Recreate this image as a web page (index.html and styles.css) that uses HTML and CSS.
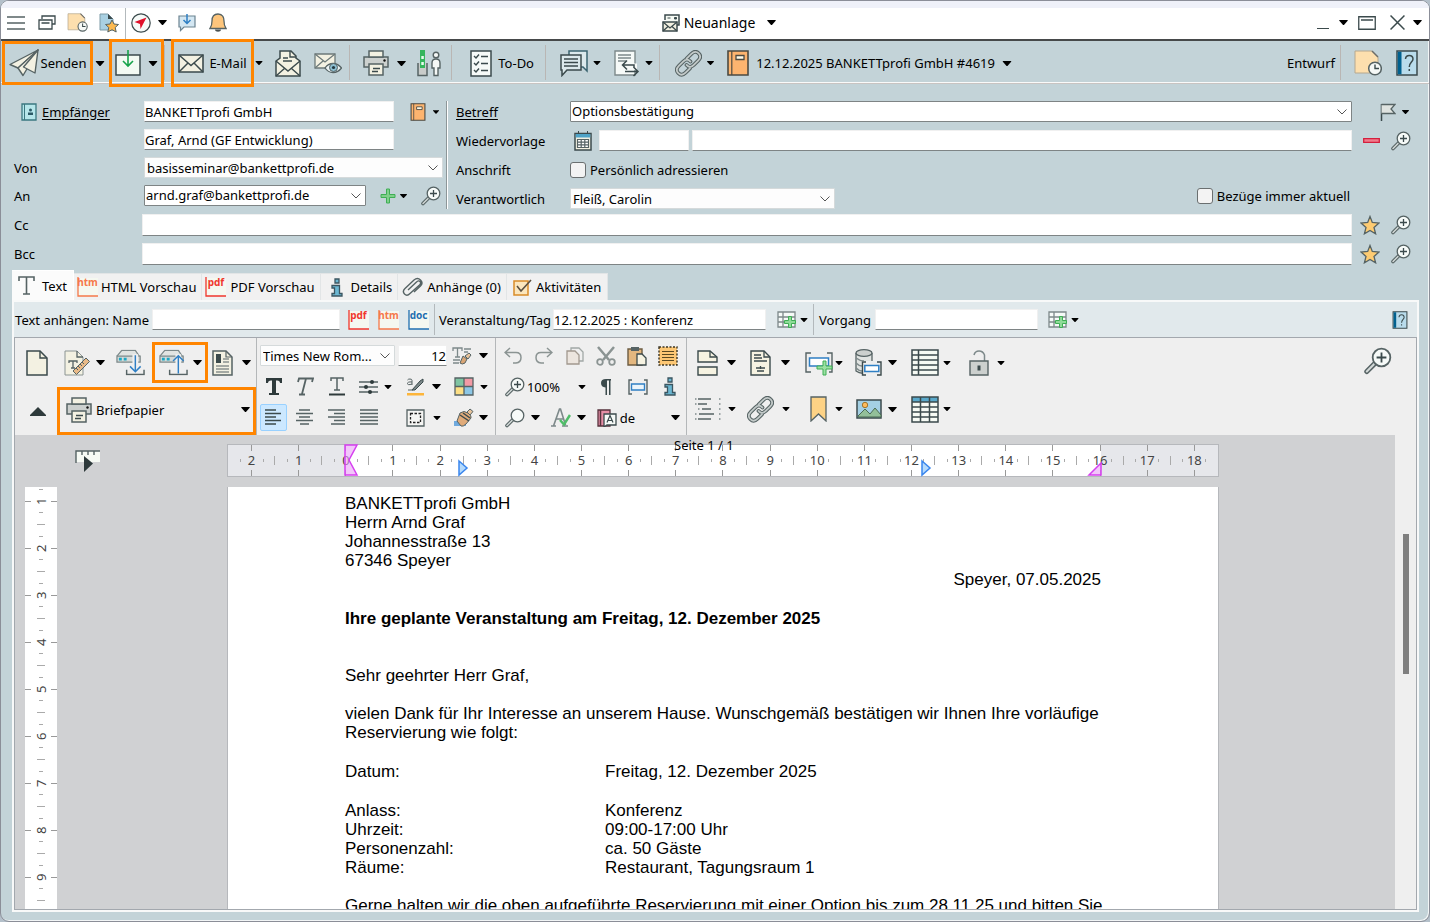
FILE: index.html
```html
<!DOCTYPE html>
<html lang="de">
<head>
<meta charset="utf-8">
<title>Neuanlage</title>
<link rel="stylesheet" href="styles.css">
</head>
<body>
<svg class="sprite" aria-hidden="true">
  <symbol id="caret" viewBox="0 0 10 6"><path d="M0 0h10v1L5.500 6h-1L0 1z" fill="#000"/></symbol>
  <symbol id="chev" viewBox="0 0 10 6"><path d="M.5.5 5 5 9.500.5" fill="none" stroke="#555"/></symbol>
  <symbol id="menu" viewBox="0 0 18 14"><path d="M0 1h18M0 7h18M0 13h18" stroke="#566364" stroke-width="1.500"/></symbol>
  <symbol id="windows" viewBox="0 0 18 15"><g fill="#fff" stroke="#3b4a4c" stroke-width="1.300"><path d="M4 4V1h13v8h-3"/><path d="M1 5h13v9H1zM3.500 8h8"/></g></symbol>
  <symbol id="doclock" viewBox="0 0 28 26"><path d="M1 1h17l6 6v16H1z" fill="#fddfae" stroke="#b5a890"/><path d="M18 1l6 6" stroke="#6d6d68" stroke-width="1.500"/><circle cx="21" cy="18.500" r="6.300" fill="#f5f8f6" stroke="#566364" stroke-width="1.500"/><path d="M21 14.500v4h4" fill="none" stroke="#3b4a4c" stroke-width="1.400"/></symbol>
  <symbol id="docstar" viewBox="0 0 20 20"><path d="M1 1h8l5 5v11H1z" fill="#a9d0e2" stroke="#7d9aa6"/><path d="M9 1v5h5z" fill="#3b4a4c"/><path d="m13 7 2 4 4.500.5-3.300 3 1 4.500-4.200-2.300L8.800 19l1-4.500-3.300-3 4.500-.5z" fill="#fdb94f" stroke="#566364"/></symbol>
  <symbol id="compass" viewBox="0 0 20 20"><circle cx="10" cy="10" r="9.200" fill="#f6faf8" stroke="#3b4a4c" stroke-width="1.200"/><path d="M15.500 4.500 3.500 9l5.500 2 .5 5z" fill="#e0102a"/></symbol>
  <symbol id="chatdown" viewBox="0 0 18 18"><path d="M1 2h16v11H6l-3.500 3.500V13H1z" fill="#d4e7f2" stroke="#6b8390" stroke-width="1.200"/><path d="M9 0v9M5.500 6 9 9.500 12.500 6" fill="none" stroke="#2f7fc4" stroke-width="1.500"/></symbol>
  <symbol id="bell" viewBox="0 0 18 20"><path d="M9 1c-5 0-6 4-6 7 0 4-.5 5.500-2 7.500h16C15.500 13.500 15 12 15 8c0-3-1-7-6-7z" fill="#fdc57c" stroke="#566364" stroke-width="1.300"/><path d="M6 16.500h6c0 3-6 3-6 0z" fill="#4a5152"/></symbol>
  <symbol id="mails" viewBox="0 0 18 18"><path d="M3 6V1h14v10h-2" fill="#f6faf4" stroke="#3b4a4c" stroke-width="1.500"/><path d="M12.500 3.500h2v1.500h-2zM5.500 4h3" fill="#3b4a4c" stroke="#3b4a4c"/><path d="M1 8h14v9H1z" fill="#f3f1e2" stroke="#3b4a4c" stroke-width="1.500"/><path d="m1 8 7 6 7-6M1 17l5-4.500M15 17l-5-4.500" fill="none" stroke="#3b4a4c" stroke-width="1.300"/></symbol>
  <symbol id="restore" viewBox="0 0 18 14"><path d="M.75.75h16.500v12.500H.75zM3 4h12" fill="#fff" stroke="#3b4a4c" stroke-width="1.300"/></symbol>
  <symbol id="close" viewBox="0 0 14 14"><path d="m.5.5 13 13M13.500.5l-13 13" stroke="#3b4a4c" stroke-width="1.400"/></symbol>
  <symbol id="plane" viewBox="0 0 30 28"><g fill="#f3f1e2" stroke="#566364" stroke-width="1.400" stroke-linejoin="round"><path d="M29 1 1 15.500l8 3.500z"/><path d="M29 1 9 19l5 7.500 3-5z"/><path d="M29 1 14.500 18l11.500 6z"/></g></symbol>
  <symbol id="savebox" viewBox="0 0 26 26"><path d="M1 5h24v20H1z" fill="#f3faf3" stroke="#3b4a4c" stroke-width="1.500"/><path d="M13 0v15M8 11l5 5 5-5" fill="none" stroke="#16a34a" stroke-width="1.600"/></symbol>
  <symbol id="mail" viewBox="0 0 26 19"><path d="M1 1h24v17H1z" fill="#f3f1e2" stroke="#3b4a4c" stroke-width="1.600"/><path d="m1 1 12 10.500L25 1M1 18l9-9M25 18l-9-9" fill="none" stroke="#3b4a4c" stroke-width="1.500"/></symbol>
  <symbol id="mailopen" viewBox="0 0 26 27"><path d="M1 11 5 8v-7h11l5 5v2l4 3v15H1z" fill="#f3f1e2" stroke="#3b4a4c" stroke-width="1.500"/><path d="M15 1v6h6M8 8h5M8 11h9M1 11l12 10 12-10M1 26l9-8M25 26l-9-8" fill="none" stroke="#3b4a4c" stroke-width="1.400"/></symbol>
  <symbol id="maileye" viewBox="0 0 28 21"><path d="M1 1h20v14H1z" fill="#f3f1e2" stroke="#6d7a7a" stroke-width="1.300"/><path d="m1 1 10 8L21 1M1 15l8-7" fill="none" stroke="#6d7a7a" stroke-width="1.300"/><path d="M11 15c4-6 12-6 16.500 0-4.500 6-12.500 6-16.500 0z" fill="#edf4f5" stroke="#566364" stroke-width="1.300"/><circle cx="19.500" cy="14.500" r="4" fill="#8dbfd2" stroke="#566364"/><circle cx="19.500" cy="14.500" r="1.600" fill="#22383f"/></symbol>
  <symbol id="printer" viewBox="0 0 26 26"><g stroke="#566364" stroke-width="1.500"><path d="M1 7h24v10H1z" fill="#ccd0ce"/><path d="M6 1h14v6H6z" fill="#f3f1e2"/><path d="M6 14h14v11H6z" fill="#f3f1e2"/></g><path d="M10 18.500h7M9 21.500h6" stroke="#3b4a4c" stroke-width="1.300"/><circle cx="21.500" cy="10.500" r="1.200" fill="#111"/></symbol>
  <symbol id="barperson" viewBox="0 0 24 27"><path d="M1 13v12.500h9V13" fill="#c9ccca" stroke="#566364" stroke-width="1.500"/><path d="M3 0h5v18H3z" fill="#35b55d"/><path d="M4.300 6h2.500v3H4.300zM4.300 12h2.500v3H4.300z" fill="#e8fbee"/><g fill="#f5f8f6" stroke="#566364" stroke-width="1.400"><circle cx="19" cy="5" r="2.800"/><path d="M15 18v-5q0-4 4-4t4 4v5h-2v7.500h-4V18z"/></g></symbol>
  <symbol id="todo" viewBox="0 0 22 27"><path d="M1 1h20v25H1z" fill="#f6faf8" stroke="#3b4a4c" stroke-width="1.500"/><path d="m4 6 2 2 3-3.500M4 13l2 2 3-3.500M4 20l2 2 3-3.500M11 6.500h7M11 13.500h7M11 20.500h7" fill="none" stroke="#3b4a4c" stroke-width="1.400"/></symbol>
  <symbol id="chats" viewBox="0 0 28 27"><path d="M9 5V1h18v20l-4-4h-3" fill="#dce9ec" stroke="#3b6470" stroke-width="1.500"/><path d="M1 5h20v15H7l-5 5.500V20H1z" fill="#dce9ec" stroke="#3b4a4c" stroke-width="1.500"/><path d="M4 9h14M4 12.500h14M4 16h14" stroke="#3b4a4c" stroke-width="1.300"/></symbol>
  <symbol id="docarrows" viewBox="0 0 26 27"><path d="M1 1h20v24H1z" fill="#f6faf8" stroke="#7d898a" stroke-width="1.400"/><path d="M4 5h13M4 8h13M4 11h8" stroke="#7d898a" stroke-width="1.300"/><path d="M21 20v-4.500H9" fill="none" stroke="#f6faf8" stroke-width="4"/><path d="M20 17v-2H9M13 10.500 8.500 15l4.500 4.500M11 21.500h13M19.500 17l4.500 4.500-4.500 4.500" fill="none" stroke="#3b4a4c" stroke-width="1.500"/></symbol>
  <symbol id="link" viewBox="0 0 28 28"><g fill="none" stroke-linecap="round"><path d="M12 9l5-5q4-4 7.500-.5t-.5 7.500l-4.500 4.500q-4 4-7.500 0M15.500 19l-4.500 4.500q-4 4-7.500.5t.5-7.500L8.500 12q4-4 7.500 0" stroke="#566364" stroke-width="4"/><path d="M12 9l5-5q4-4 7.500-.5t-.5 7.500l-4.500 4.500q-4 4-7.500 0M15.500 19l-4.500 4.500q-4 4-7.500.5t.5-7.500L8.500 12q4-4 7.500 0" stroke="#c3cac9" stroke-width="1.800"/></g></symbol>
  <symbol id="book" viewBox="0 0 22 26"><path d="M1 1h20v24H1z" fill="#fdb46f" stroke="#4b4a42" stroke-width="1.600"/><path d="M4.800 1v24" stroke="#4b4a42" stroke-width="1.200"/><path d="M9 5.500h8v4H9z" fill="#fffbe8" stroke="#4b4a42" stroke-width="1.300"/></symbol>
  <symbol id="help" viewBox="0 0 22 26"><path d="M1 1h20v24H1z" fill="#b9dcec" stroke="#3b4a4c" stroke-width="1.500"/><path d="M1.800 1.800h3.700v22.400H1.800z" fill="#00618f"/><path d="M9.500 9q.3-3.500 3.800-3.500T17 9c0 3-3.700 3.500-3.700 8M13.300 19v2" fill="none" stroke="#3b4a4c" stroke-width="1.500"/></symbol>
  <symbol id="flag" viewBox="0 0 16 18"><path d="M1.500 1v17" stroke="#3b4a4c" stroke-width="1.500"/><path d="M1.500 1.500H15L11 6l4 4.500H1.500" fill="#dfe3e0" stroke="#566364" stroke-width="1.300"/></symbol>
  <symbol id="minus" viewBox="0 0 17 5"><path d="M.7.7h15.600v3.600H.7z" fill="#f07c8c" stroke="#d41f3d" stroke-width="1.300"/></symbol>
  <symbol id="zoomplus" viewBox="0 0 20 20"><path d="m8 11.500-6 6" stroke="#566364" stroke-width="3.600" stroke-linecap="round"/><path d="m8 11.500-6 6" stroke="#d3d9d8" stroke-width="1.500" stroke-linecap="round"/><circle cx="12.500" cy="7.500" r="6.300" fill="#f6faf8" stroke="#566364" stroke-width="1.300"/><path d="M12.500 4v7M9 7.500h7" stroke="#3b4a4c" stroke-width="1.300"/></symbol>
  <symbol id="zoom" viewBox="0 0 20 20"><path d="m8 11.500-6 6" stroke="#566364" stroke-width="3.600" stroke-linecap="round"/><path d="m8 11.500-6 6" stroke="#d3d9d8" stroke-width="1.500" stroke-linecap="round"/><circle cx="12.500" cy="7.500" r="6.300" fill="#f6faf8" stroke="#566364" stroke-width="1.300"/></symbol>
  <symbol id="contact" viewBox="0 0 16 18"><path d="M1 1h14v16H1z" fill="#b6e6ea" stroke="#3b7880" stroke-width="1.300"/><path d="M3.500 1v16" stroke="#3b7880"/><circle cx="9.500" cy="7" r="1.500" fill="#2c5a66"/><path d="M7 12V9.500h5V12z" fill="#2c5a66"/></symbol>
  <symbol id="plus" viewBox="0 0 16 16"><path d="M6.500 1h3v5.500H15v3H9.500V15h-3V9.500H1v-3h5.500z" fill="#7fd08a" stroke="#3fae55"/></symbol>
  <symbol id="cal" viewBox="0 0 18 20"><path d="M1 2.500h16V19H1z" fill="#f3f1e2" stroke="#3b4a4c" stroke-width="1.500"/><path d="M1.700 3h14.600v3.500H1.700z" fill="#4fa3c7"/><path d="M4.500 0v3M13.500 0v3" stroke="#3b4a4c"/><path d="M3.500 8.500h11v8h-11zM3.500 11.200h11M3.500 13.800h11M7.200 8.500v8M10.800 8.500v8" fill="#fff" stroke="#566364" stroke-width="1.200"/></symbol>
  <symbol id="star" viewBox="0 0 20 20"><path d="m10 1.500 2.300 6 6.700.6-5 4.300 1.600 6.400-5.600-3.400-5.600 3.400L6 12.400 1 8.100l6.700-.6z" fill="#fdcb72" stroke="#566364" stroke-width="1.300"/></symbol>
  <symbol id="tee" viewBox="0 0 17 19"><path d="M1 5V1h15v4M8.500 1v17M5 18h7" fill="none" stroke="#566364" stroke-width="1.600"/></symbol>
  <symbol id="corner" viewBox="0 0 21 20"><path d="M1 1h20v18H1z" fill="#f5f8f0"/><path d="M1 0v19h20" fill="none" stroke="currentColor" stroke-width="1.300"/></symbol>
  <symbol id="info" viewBox="0 0 12 19"><path d="M4 1h4v4H4zM1 7.500h7.500v8H11V18H1v-2.500h2.500V10H1z" fill="#6bb7d2" stroke="#3b5560" stroke-width="1.300"/></symbol>
  <symbol id="clip" viewBox="0 0 21 20"><path d="m6 13 8.500-8q2-2 3.500-.5t-.5 3.500L8 16.500q-3 3-5.500.5t.5-5.500L12 3q3.500-3 6.500 0t0 6L12 15" fill="none" stroke="#566364" stroke-width="1.400"/></symbol>
  <symbol id="checkbox" viewBox="0 0 19 18"><path d="M1 3h14v14H1z" fill="#fbe6bd" stroke="#d98c28" stroke-width="1.500"/><path d="m4 8 4 5L18 2" fill="none" stroke="#5b5040" stroke-width="1.600"/></symbol>
  <symbol id="tableplus" viewBox="0 0 20 18"><path d="M1 1h17v15H1zM1 6h17M1 11h17M6 1v15" fill="#f6faf8" stroke="#7d898a" stroke-width="1.300"/><path d="M11.500 5.500h3v4h4v3h-4v4h-3v-4h-4v-3h4z" fill="#8fdb98" stroke="#3fae55"/></symbol>
  <symbol id="page" viewBox="0 0 22 26"><path d="M1 1h13l7 7v17H1z" fill="#f3f1e2" stroke="#3b4a4c" stroke-width="1.500"/><path d="M14 1v7h7" fill="none" stroke="#3b4a4c" stroke-width="1.400"/></symbol>
  <symbol id="pageruler" viewBox="0 0 26 26"><path d="M1 1h12l6 6v18H1z" fill="#f3f1e2" stroke="#8b9493"/><path d="M13 1v6h6M5 13v-2h8v2M9 11v7M7 18h4" fill="none" stroke="#566364" stroke-width="1.300"/><path d="M9 21 22 8l3.500 3.500-13 13z" fill="#e8b987" stroke="#566364"/><path d="m12 18 2 2m0-4 2 2m0-4 2 2m0-4 2 2" stroke="#566364"/></symbol>
  <symbol id="drive" viewBox="0 0 30 27"><path d="M1 7 6 1h14l4 6" fill="#e1e4e2" stroke="#7d898a" stroke-width="1.300"/><path d="M1 7h24v6H1z" fill="#d5dad8" stroke="#7d898a" stroke-width="1.300"/><path d="M3 8.500h3v3H3zM8 8.500h3v3H8z" fill="#1ba7c4"/><path d="M20 5v18" stroke="#f0f0f0" stroke-width="6"/><path d="M11 21v5h18v-5" fill="none" stroke="#566364" stroke-width="1.500"/></symbol>
  <symbol id="drivedown" viewBox="0 0 30 27"><use href="#drive"/><path d="M20 6v17M14.500 17.500 20 23l5.500-5.500" fill="none" stroke="#2f7fc4" stroke-width="1.500"/></symbol>
  <symbol id="driveup" viewBox="0 0 30 27"><use href="#drive"/><path d="M20 25V6M14.500 12 20 6.500l5.500 5.500" fill="none" stroke="#2f7fc4" stroke-width="1.500"/></symbol>
  <symbol id="news" viewBox="0 0 21 26"><path d="M1 1h13l6 6v18H1z" fill="#f3f1e2" stroke="#566364" stroke-width="1.500"/><path d="M4 4h5v9H4z" fill="#3b4a4c"/><path d="M14 1v6h6M11 9h6M11 12h6M4 16h13M4 19h13M4 22h13" fill="none" stroke="#566364" stroke-width="1.200"/></symbol>
  <symbol id="up" viewBox="0 0 16 9"><path d="M8 0l8 8v1H0V8z" fill="#2e3a3b"/></symbol>
  <symbol id="tbrush" viewBox="0 0 21 18"><path d="M1 4V1h9v3M5.500 1v9M3 10h5M12 2h7M12 5h4M1 13h7M1 16h6" fill="none" stroke="#7d898a" stroke-width="1.300"/><path d="m8 16 3-7 4 3-2 4q-3 2-5 0z" fill="#d9a575" stroke="#566364"/><path d="m13 9 4-3 2 2-3 4z" fill="#e8c39b" stroke="#566364"/></symbol>
  <symbol id="bold" viewBox="0 0 18 19"><path d="M1 1h16v5h-2q0-2.500-3-2.500h-1V16h3v2H4v-2h3V3.500H6Q3 3.500 3 6H1z" fill="#2e3a3b"/></symbol>
  <symbol id="ital" viewBox="0 0 19 19"><path d="m3 5 1-3.500h14L17 5M11 1.500 7 17M4 17.500h6" fill="none" stroke="#566364" stroke-width="1.800"/></symbol>
  <symbol id="under" viewBox="0 0 18 19"><path d="M3 4V1h12v3M9 1v12M6 13h6" fill="none" stroke="#566364" stroke-width="1.500"/><path d="M1 17.500h16" stroke="#2e3a3b" stroke-width="2"/></symbol>
  <symbol id="sliders" viewBox="0 0 19 16"><path d="M0 3h19M0 8h19M0 13h19" stroke="#566364" stroke-width="1.500"/><circle cx="13" cy="3" r="2" fill="#2e3a3b"/><circle cx="7" cy="8" r="2" fill="#2e3a3b"/><circle cx="11" cy="13" r="2" fill="#2e3a3b"/></symbol>
  <symbol id="marker" viewBox="0 0 19 19"><path d="M1 16h17v2.500H1z" fill="#fdb53a"/><path d="m6 13 8-9 3-2v3l-8 8z" fill="#7d898a" stroke="#3b4a4c"/><path d="M6 8V3.500Q6 2 4 2T1.500 3M6 5Q1.500 4.500 1.500 6.500T6 7M2 13h5" fill="none" stroke="#566364"/></symbol>
  <symbol id="palette" viewBox="0 0 20 19"><path d="M1 1h9v8.500H1z" fill="#7fc4a2"/><path d="M10 1h9v8.500h-9z" fill="#f29aa5"/><path d="M1 9.500h9V18H1z" fill="#fddf84"/><path d="M10 9.500h9V18h-9z" fill="#8cc7e6"/><path d="M1 1h18v17H1zM10 1v17M1 9.500h18" fill="none" stroke="#566364" stroke-width="1.300"/></symbol>
  <symbol id="al" viewBox="0 0 17 17"><path d="M0 1h11M0 4.500h16M0 8h11M0 11.500h16M0 15h11" stroke="#3b4a4c" stroke-width="1.300"/></symbol>
  <symbol id="ac" viewBox="0 0 17 17"><path d="M3 1h11M0 4.500h17M3 8h11M0 11.500h17M4 15h9" stroke="#566364" stroke-width="1.300"/></symbol>
  <symbol id="ar" viewBox="0 0 17 17"><path d="M0 1h17M6 4.500h11M0 8h17M6 11.500h11M3 15h14" stroke="#566364" stroke-width="1.300"/></symbol>
  <symbol id="aj" viewBox="0 0 18 17"><path d="M0 1h18M0 4.500h18M0 8h18M0 11.500h18M0 15h18" stroke="#566364" stroke-width="1.300"/></symbol>
  <symbol id="frame" viewBox="0 0 19 18"><path d="M1 1h17v16H1z" fill="#f6f6f4" stroke="#566364" stroke-width="1.300"/><path d="M4.500 4.500h10v9h-10z" fill="none" stroke="#222" stroke-width="1.300" stroke-dasharray="2.500 1.500"/></symbol>
  <symbol id="brush" viewBox="0 0 20 19"><path d="M0 13h12v5H0z" fill="#6fa9dd"/><path d="m3 13 3-8q4-3 8 0t3 5l-5 6q-3 3-5 2z" fill="#e0ab7a" stroke="#566364"/><path d="m6 7 9 6M9 5l7 5" stroke="#3b4a4c" stroke-width="1.500"/><path d="m13 4 3-3 3 2.500L16 7z" fill="#e8c39b" stroke="#566364"/></symbol>
  <symbol id="undo" viewBox="0 0 18 17"><path d="M6 1 1 5.500 6 10M1 5.500h11q5 0 5 5t-5 5.500H9" fill="none" stroke="#8b9493" stroke-width="1.500"/></symbol>
  <symbol id="redo" viewBox="0 0 18 17"><path d="m12 1 5 4.500-5 4.500M17 5.500H6q-5 0-5 5T6 16h3" fill="none" stroke="#8b9493" stroke-width="1.500"/></symbol>
  <symbol id="copy" viewBox="0 0 18 18"><path d="M5 4V1h8l4 4v9h-4" fill="none" stroke="#a1a8a6" stroke-width="1.300"/><path d="M1 4h8l4 4v9H1z" fill="#ece5de" stroke="#a1988e" stroke-width="1.300"/></symbol>
  <symbol id="cut" viewBox="0 0 20 20"><path d="M2 1l11 13M18 1 7 14" stroke="#8b9493" stroke-width="2.500"/><circle cx="4" cy="16" r="2.800" fill="none" stroke="#8b9493" stroke-width="1.800"/><circle cx="16" cy="16" r="2.800" fill="none" stroke="#8b9493" stroke-width="1.800"/></symbol>
  <symbol id="paste" viewBox="0 0 20 20"><path d="M1 3h14v16H1z" fill="#e3b77f" stroke="#6d5c42" stroke-width="1.400"/><path d="M4 1h8v4H4z" fill="#566364"/><path d="M10 8h5l4 4v7h-9z" fill="#f6f3e2" stroke="#3b4a4c" stroke-width="1.300"/></symbol>
  <symbol id="selall" viewBox="0 0 20 20"><path d="M1 1h18v18H1z" fill="#fdc774" stroke="#3b3422" stroke-width="1.400" stroke-dasharray="2 1.500"/><path d="M4 5.500h12M4 8.500h12M4 11.500h12M4 14.500h12" stroke="#5c4a22" stroke-width="1.200"/></symbol>
  <symbol id="para" viewBox="0 0 12 18"><path d="M11 1H6Q1 1 1 5t4.500 4.500V17H7V2.500h2V17h1.500V2.500H11z" fill="#3b4a4c"/></symbol>
  <symbol id="field" viewBox="0 0 20 16"><path d="M4 1H1v14h3M16 1h3v14h-3" fill="none" stroke="#566364" stroke-width="1.400"/><path d="M3.500 5h13v6h-13z" fill="#eaf4fb" stroke="#2f7fc4" stroke-width="1.400"/></symbol>
  <symbol id="spell" viewBox="0 0 20 19"><path d="M0 18h5M2.500 18 8.500 1h1l5 16M5 11h7M11 18h6" fill="none" stroke="#7d898a" stroke-width="1.600"/><path d="m9 12 4 4.500L19 7" fill="none" stroke="#4fbd68" stroke-width="2.500"/></symbol>
  <symbol id="lang" viewBox="0 0 20 18"><path d="M1 1h12v16H1z" fill="#e58fa6" stroke="#56323d" stroke-width="1.300"/><path d="M3.500 1v16" stroke="#56323d" stroke-width="1.500"/><path d="M7 5h12v11H10l-3 2z" fill="#f6faf8" stroke="#3b4a4c" stroke-width="1.300"/><path d="m10 13.500 3-7 3 7M11 11.500h4" fill="none" stroke="#3b4a4c" stroke-width="1.200"/></symbol>
  <symbol id="pagebreak" viewBox="0 0 22 26"><path d="M1 12V1h12l7 6v5zM1 17h19v8H1z" fill="#f6f3e2" stroke="#3b4a4c" stroke-width="1.400"/><path d="M13 1v6h7" fill="none" stroke="#3b4a4c" stroke-width="1.300"/></symbol>
  <symbol id="doctext" viewBox="0 0 21 26"><path d="M1 1h13l6 6v18H1z" fill="#f6f3e2" stroke="#3b4a4c" stroke-width="1.400"/><path d="M14 1v6h6M4 5h7M4 8h8M4 11h13M6 18h9M7 21h7M10.500 16v3" fill="none" stroke="#3b4a4c" stroke-width="1.300"/></symbol>
  <symbol id="fieldplus" viewBox="0 0 28 26"><path d="M6 3H1v19h5M22 3h5v19h-3" fill="none" stroke="#566364" stroke-width="1.400"/><path d="M4.500 8h19v8h-19z" fill="#fff" stroke="#2f7fc4" stroke-width="1.500"/><path d="M18 11h3v5h6v3h-6v6h-3v-6h-6v-3h6z" fill="#9be0a3" stroke="#3fae55"/></symbol>
  <symbol id="dbfield" viewBox="0 0 27 27"><path d="M1 4v18q4 3 9 2V14h7V4" fill="#e1e4e2" stroke="#566364" stroke-width="1.300"/><path d="M1 9q4 3 8 3M1 14q3 3 6 3M1 19q3 3 6 3" fill="none" stroke="#7d898a" stroke-width="1.500"/><ellipse cx="9" cy="4" rx="8" ry="3.300" fill="#ccd0ce" stroke="#566364" stroke-width="1.300"/><path d="M7 12h19.500v15H7z" fill="#efefef"/><path d="M11 13H7.500v13H11M22 13h4v13h-4" fill="none" stroke="#3b4a4c" stroke-width="1.400"/><path d="M9.800 16.500h14v6h-14z" fill="#fff" stroke="#2f7fc4" stroke-width="1.500"/></symbol>
  <symbol id="rows" viewBox="0 0 28 27"><path d="M1 1h26v25H1zM1 6h26M1 11h26M1 16h26M1 21h26M7.500 1v25" fill="#f6faf4" stroke="#3b4a4c" stroke-width="1.500"/></symbol>
  <symbol id="lock" viewBox="0 0 20 26"><path d="M5 5q1-4 5-4t5.500 4v6" fill="none" stroke="#7d898a" stroke-width="1.500"/><path d="M1 11h18v14H1z" fill="#ccd0ce" stroke="#566364" stroke-width="1.400"/><path d="M8.500 15.500h3v5h-3z" fill="#3b4a4c"/></symbol>
  <symbol id="lines" viewBox="0 0 26 22"><path d="M3 1h13M3 6h9M7 11h9M4 16h15M3 21h13" stroke="#566364" stroke-width="1.400"/><path d="M0 1h1.500M0 6h1.500M3 11h1.500M0 16h1.500M0 21h1.500M24 1h1.500M24 6h1.500M24 11h1.500M24 16h1.500M24 21h1.500" stroke="#7d898a" stroke-width="1.500"/></symbol>
  <symbol id="bookmark" viewBox="0 0 17 26"><path d="M1 1h15v24l-7.500-7L1 25z" fill="#fdd285" stroke="#566364" stroke-width="1.300"/></symbol>
  <symbol id="image" viewBox="0 0 26 20"><path d="M1 1h24v18H1z" fill="#a4d0e4" stroke="#3b4a4c" stroke-width="1.500"/><path d="m2 17 7-7 5 5 5-6 6 7v2H2z" fill="#93c09a" stroke="#4b6a52"/><circle cx="9" cy="6" r="2.700" fill="#fdba5a" stroke="#a0762c"/></symbol>
  <symbol id="table" viewBox="0 0 28 27"><path d="M1 1h26v25H1z" fill="#f6faf4"/><path d="M1 1h26v5H1z" fill="#5aa9cb"/><path d="M1 1h26v25H1zM1 6h26M1 11h26M1 16h26M1 21h26M9.500 1v25M18.500 1v25" fill="none" stroke="#3b4a4c" stroke-width="1.500"/></symbol>
  <symbol id="rulerplay" viewBox="0 0 26 22"><path d="M1 1h24v11H1z" fill="#f6faf4"/><path d="M1 13V1h24M7 1v4M13 1v4M19 1v4" fill="none" stroke="#566364" stroke-width="1.400"/><path d="M9 6l9 7.500L9 22z" fill="#2e3a3b"/></symbol>
</svg>

<div class="window">
  <header class="titlebar">
    <div class="title-left">
      <button class="ib" aria-label="Menü"><svg width="18" height="14"><use href="#menu"/></svg></button>
      <button class="ib" aria-label="Fenster"><svg width="18" height="15"><use href="#windows"/></svg></button>
      <button class="ib" aria-label="Wiedervorlage"><svg width="21" height="19"><use href="#doclock"/></svg></button>
      <button class="ib" aria-label="Favorit"><svg width="20" height="20"><use href="#docstar"/></svg></button>
      <i class="rule"></i>
      <button class="ib" aria-label="Kompass"><svg width="20" height="20"><use href="#compass"/></svg></button>
      <button class="ib" aria-label="Mehr"><svg width="9" height="5"><use href="#caret"/></svg></button>
      <button class="ib" aria-label="Nachrichten"><svg width="18" height="18"><use href="#chatdown"/></svg></button>
      <button class="ib" aria-label="Hinweise"><svg width="18" height="20"><use href="#bell"/></svg></button>
    </div>
    <button class="ib title"><svg width="18" height="18"><use href="#mails"/></svg><span>Neuanlage</span><svg class="far" width="9" height="5"><use href="#caret"/></svg></button>
    <div class="title-right">
      <button class="ib min" aria-label="Minimieren"></button>
      <button class="ib" aria-label="Mehr"><svg width="9" height="5"><use href="#caret"/></svg></button>
      <button class="ib" aria-label="Wiederherstellen"><svg width="18" height="14"><use href="#restore"/></svg></button>
      <button class="ib" aria-label="Schließen"><svg width="15" height="15"><use href="#close"/></svg></button>
      <button class="ib" aria-label="Mehr"><svg width="9" height="5"><use href="#caret"/></svg></button>
    </div>
  </header>

  <div class="mainbar">
    <button class="ib mark send"><svg width="30" height="28"><use href="#plane"/></svg>Senden</button>
    <button class="ib" aria-label="Senden mehr"><svg width="10" height="5"><use href="#caret"/></svg></button>
    <button class="ib mark tall save" aria-label="Speichern"><svg width="26" height="26"><use href="#savebox"/></svg><svg width="10" height="5"><use href="#caret"/></svg></button>
    <i class="rule"></i>
    <button class="ib mark tall email"><svg width="26" height="19"><use href="#mail"/></svg>E-Mail</button>
    <button class="ib" aria-label="E-Mail mehr"><svg width="8" height="4"><use href="#caret"/></svg></button>
    <button class="ib" aria-label="Mail öffnen"><svg width="26" height="27"><use href="#mailopen"/></svg></button>
    <button class="ib" aria-label="Mail Vorschau"><svg width="28" height="21"><use href="#maileye"/></svg></button>
    <i class="rule"></i>
    <button class="ib" aria-label="Drucken"><svg width="26" height="26"><use href="#printer"/></svg></button>
    <button class="ib" aria-label="Drucken mehr"><svg width="9" height="5"><use href="#caret"/></svg></button>
    <button class="ib" aria-label="Status"><svg width="24" height="27"><use href="#barperson"/></svg></button>
    <i class="rule"></i>
    <button class="ib gap6"><svg width="22" height="27"><use href="#todo"/></svg>To-Do</button>
    <i class="rule"></i>
    <button class="ib" aria-label="Kommentare"><svg width="28" height="27"><use href="#chats"/></svg></button>
    <button class="ib" aria-label="Mehr"><svg width="8" height="4"><use href="#caret"/></svg></button>
    <button class="ib" aria-label="Umwandeln"><svg width="26" height="27"><use href="#docarrows"/></svg></button>
    <button class="ib" aria-label="Mehr"><svg width="8" height="4"><use href="#caret"/></svg></button>
    <i class="rule"></i>
    <button class="ib" aria-label="Verknüpfung"><svg width="27" height="27"><use href="#link"/></svg></button>
    <button class="ib" aria-label="Mehr"><svg width="7" height="4"><use href="#caret"/></svg></button>
    <button class="ib" aria-label="Buchung"><svg width="22" height="26"><use href="#book"/></svg></button>
    <button class="ib gap8">12.12.2025 BANKETTprofi GmbH #4619<svg width="10" height="5"><use href="#caret"/></svg></button>
    <span>Entwurf</span>
    <i class="rule"></i>
    <button class="ib" aria-label="Wiedervorlage"><svg width="28" height="26"><use href="#doclock"/></svg></button>
    <button class="ib" aria-label="Hilfe"><svg width="22" height="26"><use href="#help"/></svg></button>
  </div>

  <form class="form">
    <div class="heads">
      <div class="left">
        <label class="lead" for="emp"><svg width="16" height="18"><use href="#contact"/></svg><u>Empfänger</u></label>
        <div class="line">
          <input id="emp" class="box w250" value="BANKETTprofi GmbH">
          <button type="button" class="ib push" aria-label="Adressbuch"><svg width="16" height="18"><use href="#book"/></svg><svg width="6" height="4"><use href="#caret"/></svg></button>
        </div>
        <span></span>
        <div class="line"><input class="box w250" aria-label="Ansprechpartner" value="Graf, Arnd (GF Entwicklung)"></div>
        <label for="von">Von</label>
        <div class="pick soft wide"><select id="von"><option>basisseminar@bankettprofi.de</option></select><svg width="10" height="6"><use href="#chev"/></svg></div>
        <label for="an">An</label>
        <div class="line">
          <div class="pick hard w222"><select id="an"><option>arnd.graf@bankettprofi.de</option></select><svg width="10" height="6"><use href="#chev"/></svg></div>
          <button type="button" class="ib tight push14" aria-label="Hinzufügen"><svg width="16" height="16"><use href="#plus"/></svg><svg width="7" height="4"><use href="#caret"/></svg></button>
          <button type="button" class="ib push14" aria-label="Suchen"><svg width="20" height="20"><use href="#zoomplus"/></svg></button>
        </div>
      </div>
      <div class="right">
        <label for="betreff"><u>Betreff</u></label>
        <div class="pick hard"><select id="betreff"><option>Optionsbestätigung</option></select><svg width="10" height="6"><use href="#chev"/></svg></div>
        <button type="button" class="ib side flagside" aria-label="Markierung"><svg width="16" height="18"><use href="#flag"/></svg><svg width="7" height="4"><use href="#caret"/></svg></button>
        <label for="wv">Wiedervorlage</label>
        <div class="line due">
          <button type="button" class="ib" aria-label="Kalender"><svg width="18" height="20"><use href="#cal"/></svg></button>
          <input id="wv" class="box w90">
          <input class="box grow" aria-label="Wiedervorlage Text">
        </div>
        <div class="side pair"><button type="button" class="ib" aria-label="Entfernen"><svg width="17" height="5"><use href="#minus"/></svg></button><button type="button" class="ib" aria-label="Suchen"><svg width="20" height="20"><use href="#zoomplus"/></svg></button></div>
        <span>Anschrift</span>
        <label class="check"><input type="checkbox">Persönlich adressieren</label>
        <span></span>
        <label for="ver">Verantwortlich</label>
        <div class="line spread">
          <div class="pick soft w265"><select id="ver"><option>Fleiß, Carolin</option></select><svg width="10" height="6"><use href="#chev"/></svg></div>
          <label class="check"><input type="checkbox">Bezüge immer aktuell</label>
        </div>
        <span></span>
      </div>
    </div>
    <div class="copies">
      <label for="cc">Cc</label><input id="cc" class="box">
      <div class="side pair"><button type="button" class="ib" aria-label="Favorit"><svg width="20" height="20"><use href="#star"/></svg></button><button type="button" class="ib" aria-label="Suchen"><svg width="20" height="20"><use href="#zoomplus"/></svg></button></div>
      <label for="bcc">Bcc</label><input id="bcc" class="box">
      <div class="side pair"><button type="button" class="ib" aria-label="Favorit"><svg width="20" height="20"><use href="#star"/></svg></button><button type="button" class="ib" aria-label="Suchen"><svg width="20" height="20"><use href="#zoomplus"/></svg></button></div>
    </div>
  </form>

  <nav class="tabs">
    <button class="tab active"><svg width="17" height="19"><use href="#tee"/></svg>Text</button>
    <button class="tab"><span class="ext htm">htm<svg width="21" height="20"><use href="#corner"/></svg></span>HTML Vorschau</button>
    <button class="tab"><span class="ext pdf">pdf<svg width="21" height="20"><use href="#corner"/></svg></span>PDF Vorschau</button>
    <button class="tab"><svg width="12" height="19"><use href="#info"/></svg>Details</button>
    <button class="tab"><svg width="21" height="20"><use href="#clip"/></svg>Anhänge (0)</button>
    <button class="tab"><svg width="19" height="18"><use href="#checkbox"/></svg>Aktivitäten</button>
  </nav>

  <main class="panel">
    <div class="subbar">
      <label for="tname">Text anhängen: Name</label>
      <input id="tname" class="box">
      <button class="ib ext pdf">pdf<svg width="21" height="20"><use href="#corner"/></svg></button>
      <button class="ib ext htm">htm<svg width="21" height="20"><use href="#corner"/></svg></button>
      <button class="ib ext doc">doc<svg width="21" height="20"><use href="#corner"/></svg></button>
      <i class="rule"></i>
      <label for="vtag">Veranstaltung/Tag</label>
      <input id="vtag" class="box" value="12.12.2025 : Konferenz">
      <button class="ib" aria-label="Einfügen"><svg width="20" height="18"><use href="#tableplus"/></svg></button>
      <button class="ib" aria-label="Mehr"><svg width="8" height="4"><use href="#caret"/></svg></button>
      <i class="rule"></i>
      <label for="vorgang">Vorgang</label>
      <input id="vorgang" class="box">
      <button class="ib" aria-label="Einfügen"><svg width="20" height="18"><use href="#tableplus"/></svg></button>
      <button class="ib" aria-label="Mehr"><svg width="8" height="4"><use href="#caret"/></svg></button>
      <button class="ib" aria-label="Hilfe"><svg width="16" height="18"><use href="#help"/></svg></button>
    </div>

    <div class="editor">
      <div class="ribbon">
        <section class="files">
          <div class="filerow">
            <button class="ib" aria-label="Neu"><svg width="22" height="26"><use href="#page"/></svg></button>
            <button class="ib" aria-label="Layout"><svg width="26" height="26"><use href="#pageruler"/></svg></button>
            <button class="ib" aria-label="Mehr"><svg width="9" height="5"><use href="#caret"/></svg></button>
            <button class="ib" aria-label="Speichern"><svg width="29" height="27"><use href="#drivedown"/></svg></button>
            <button class="ib mark load" aria-label="Laden"><svg width="29" height="27"><use href="#driveup"/></svg><svg width="9" height="5"><use href="#caret"/></svg></button>
            <button class="ib" aria-label="Vorlage"><svg width="21" height="26"><use href="#news"/></svg></button>
            <button class="ib" aria-label="Mehr"><svg width="9" height="5"><use href="#caret"/></svg></button>
          </div>
          <div class="paperrow">
            <button class="ib" aria-label="Einklappen"><svg width="16" height="9"><use href="#up"/></svg></button>
            <button class="ib mark paper"><svg width="26" height="26"><use href="#printer"/></svg><span>Briefpapier</span><svg width="9" height="5"><use href="#caret"/></svg></button>
          </div>
        </section>

        <section class="fonts">
          <div class="fontrow">
            <div class="pick soft"><select aria-label="Schriftart"><option>Times New Rom...</option></select><svg width="10" height="6"><use href="#chev"/></svg></div>
            <input class="box num" aria-label="Schriftgröße" value="12">
            <button class="ib" aria-label="Format"><svg width="21" height="18"><use href="#tbrush"/></svg></button>
            <button class="ib" aria-label="Mehr"><svg width="9" height="5"><use href="#caret"/></svg></button>
          </div>
          <div class="fmtrow">
            <button class="ib cell" aria-label="Fett"><svg width="18" height="19"><use href="#bold"/></svg></button>
            <button class="ib cell" aria-label="Kursiv"><svg width="19" height="19"><use href="#ital"/></svg></button>
            <button class="ib cell" aria-label="Unterstrichen"><svg width="18" height="19"><use href="#under"/></svg></button>
            <button class="ib cell" aria-label="Abstand"><svg width="19" height="16"><use href="#sliders"/></svg></button>
            <button class="ib" aria-label="Mehr"><svg width="8" height="4"><use href="#caret"/></svg></button>
            <button class="ib cell" aria-label="Textmarker"><svg width="19" height="19"><use href="#marker"/></svg></button>
            <button class="ib" aria-label="Mehr"><svg width="9" height="5"><use href="#caret"/></svg></button>
            <button class="ib cell" aria-label="Farbe"><svg width="20" height="19"><use href="#palette"/></svg></button>
            <button class="ib" aria-label="Mehr"><svg width="8" height="4"><use href="#caret"/></svg></button>
          </div>
          <div class="fmtrow">
            <button class="ib cell on" aria-label="Linksbündig"><svg width="17" height="17"><use href="#al"/></svg></button>
            <button class="ib cell" aria-label="Zentriert"><svg width="17" height="17"><use href="#ac"/></svg></button>
            <button class="ib cell" aria-label="Rechtsbündig"><svg width="17" height="17"><use href="#ar"/></svg></button>
            <button class="ib cell" aria-label="Blocksatz"><svg width="18" height="17"><use href="#aj"/></svg></button>
            <span></span>
            <button class="ib cell" aria-label="Rahmen"><svg width="19" height="18"><use href="#frame"/></svg></button>
            <button class="ib" aria-label="Mehr"><svg width="8" height="4"><use href="#caret"/></svg></button>
            <button class="ib cell" aria-label="Pinsel"><svg width="20" height="19"><use href="#brush"/></svg></button>
            <button class="ib" aria-label="Mehr"><svg width="9" height="5"><use href="#caret"/></svg></button>
          </div>
        </section>

        <section class="edits">
          <div class="editrow">
            <button class="ib" aria-label="Rückgängig"><svg width="18" height="17"><use href="#undo"/></svg></button>
            <button class="ib" aria-label="Wiederholen"><svg width="18" height="17"><use href="#redo"/></svg></button>
            <button class="ib" aria-label="Kopieren"><svg width="18" height="18"><use href="#copy"/></svg></button>
            <button class="ib" aria-label="Ausschneiden"><svg width="20" height="20"><use href="#cut"/></svg></button>
            <button class="ib" aria-label="Einfügen"><svg width="20" height="20"><use href="#paste"/></svg></button>
            <button class="ib" aria-label="Alles markieren"><svg width="20" height="20"><use href="#selall"/></svg></button>
          </div>
          <div class="zoomrow">
            <button class="ib cell" aria-label="Zoom"><svg width="20" height="20"><use href="#zoomplus"/></svg></button>
            <span>100%</span>
            <button class="ib" aria-label="Zoomstufe"><svg width="8" height="4"><use href="#caret"/></svg></button>
            <button class="ib cell" aria-label="Absatzmarken"><svg width="12" height="18"><use href="#para"/></svg></button>
            <button class="ib cell" aria-label="Feld"><svg width="20" height="16"><use href="#field"/></svg></button>
            <button class="ib cell" aria-label="Info"><svg width="12" height="19"><use href="#info"/></svg></button>
          </div>
          <div class="langrow">
            <button class="ib cell" aria-label="Suchen"><svg width="20" height="20"><use href="#zoom"/></svg></button>
            <button class="ib" aria-label="Mehr"><svg width="9" height="5"><use href="#caret"/></svg></button>
            <button class="ib cell" aria-label="Rechtschreibung"><svg width="20" height="19"><use href="#spell"/></svg></button>
            <button class="ib" aria-label="Mehr"><svg width="9" height="5"><use href="#caret"/></svg></button>
            <button class="ib cell" aria-label="Sprache"><svg width="20" height="18"><use href="#lang"/></svg></button>
            <span>de</span>
            <button class="ib" aria-label="Sprachauswahl"><svg width="9" height="5"><use href="#caret"/></svg></button>
          </div>
        </section>

        <section class="inserts">
          <div class="insrow">
            <button class="ib cell" aria-label="Umbruch"><svg width="22" height="26"><use href="#pagebreak"/></svg></button>
            <button class="ib" aria-label="Mehr"><svg width="9" height="5"><use href="#caret"/></svg></button>
            <button class="ib cell" aria-label="Kopfzeile"><svg width="21" height="26"><use href="#doctext"/></svg></button>
            <button class="ib" aria-label="Mehr"><svg width="9" height="5"><use href="#caret"/></svg></button>
            <button class="ib cell" aria-label="Feld einfügen"><svg width="28" height="26"><use href="#fieldplus"/></svg></button>
            <button class="ib" aria-label="Mehr"><svg width="8" height="4"><use href="#caret"/></svg></button>
            <button class="ib cell" aria-label="Datenfeld"><svg width="27" height="27"><use href="#dbfield"/></svg></button>
            <button class="ib" aria-label="Mehr"><svg width="9" height="5"><use href="#caret"/></svg></button>
            <button class="ib cell" aria-label="Zeilen"><svg width="28" height="27"><use href="#rows"/></svg></button>
            <button class="ib" aria-label="Mehr"><svg width="8" height="4"><use href="#caret"/></svg></button>
            <button class="ib cell" aria-label="Sperre"><svg width="20" height="26"><use href="#lock"/></svg></button>
            <button class="ib" aria-label="Mehr"><svg width="8" height="4"><use href="#caret"/></svg></button>
          </div>
          <div class="insrow">
            <button class="ib cell" aria-label="Liste"><svg width="26" height="22"><use href="#lines"/></svg></button>
            <button class="ib" aria-label="Mehr"><svg width="8" height="4"><use href="#caret"/></svg></button>
            <button class="ib cell" aria-label="Verknüpfung"><svg width="27" height="27"><use href="#link"/></svg></button>
            <button class="ib" aria-label="Mehr"><svg width="8" height="4"><use href="#caret"/></svg></button>
            <button class="ib cell" aria-label="Textmarke"><svg width="17" height="26"><use href="#bookmark"/></svg></button>
            <button class="ib" aria-label="Mehr"><svg width="8" height="4"><use href="#caret"/></svg></button>
            <button class="ib cell" aria-label="Bild"><svg width="26" height="20"><use href="#image"/></svg></button>
            <button class="ib" aria-label="Mehr"><svg width="9" height="5"><use href="#caret"/></svg></button>
            <button class="ib cell" aria-label="Tabelle"><svg width="28" height="27"><use href="#table"/></svg></button>
            <button class="ib" aria-label="Mehr"><svg width="8" height="4"><use href="#caret"/></svg></button>
          </div>
        </section>
        <button class="ib bigzoom" aria-label="Vergrößern"><svg width="28" height="28"><use href="#zoomplus"/></svg></button>
      </div>

      <div class="work">
        <div class="canvas">
          <button class="ib rulerbtn" aria-label="Lineal"><svg width="26" height="22"><use href="#rulerplay"/></svg></button>
          <div class="hruler">
            <div class="ticks">
              <span>2</span><span>1</span><span>0</span><span>1</span><span>2</span><span>3</span><span>4</span><span>5</span><span>6</span><span>7</span><span>8</span><span>9</span><span>10</span><span>11</span><span>12</span><span>13</span><span>14</span><span>15</span><span>16</span><span>17</span><span>18</span>
            </div>
            <svg class="stops" viewBox="0 0 992 33" aria-hidden="true">
              <g fill="#e9a0f6" fill-opacity=".6" stroke="#d63ff0" stroke-width="1.500"><path d="M118 1h12l-8 15 8 15h-12z"/><path d="M874 19v12h-12z"/></g>
              <g fill="#b5dafc" stroke="#3a86ee" stroke-width="1.500"><path d="m232 17 8 7-8 7zM695 17l8 7-8 7z"/></g>
            </svg>
            <p class="pages">Seite 1 / 1</p>
          </div>
          <div class="vruler">
            <span>1</span><span>2</span><span>3</span><span>4</span><span>5</span><span>6</span><span>7</span><span>8</span><span>9</span><span></span>
          </div>
          <article class="sheet">
            <p>BANKETTprofi GmbH<br>Herrn Arnd Graf<br>Johannesstraße 13<br>67346 Speyer</p>
            <p class="date">Speyer, 07.05.2025</p>
            <h1>Ihre geplante Veranstaltung am Freitag, 12. Dezember 2025</h1>
            <p class="para">Sehr geehrter Herr Graf,</p>
            <p class="para">vielen Dank für Ihr Interesse an unserem Hause. Wunschgemäß bestätigen wir Ihnen Ihre vorläufige<br>Reservierung wie folgt:</p>
            <dl><dt>Datum:</dt><dd>Freitag, 12. Dezember 2025</dd></dl>
            <dl><dt>Anlass:</dt><dd>Konferenz</dd><dt>Uhrzeit:</dt><dd>09:00-17:00 Uhr</dd><dt>Personenzahl:</dt><dd>ca. 50 Gäste</dd><dt>Räume:</dt><dd>Restaurant, Tagungsraum 1</dd></dl>
            <p class="para">Gerne halten wir die oben aufgeführte Reservierung mit einer Option bis zum 28.11.25 und bitten Sie</p>
          </article>
        </div>
        <div class="scroll"><i></i></div>
      </div>
    </div>
  </main>
</div>
</body>
</html>
```
FILE: styles.css
```css
* { box-sizing: border-box; }
body {
  margin: 0;
  height: 100vh;
  background: #b4c0ca;
  font: 13px/18px "Noto Sans", "Open Sans", sans-serif;
  color: #000;
}
.sprite { display: none; }
svg { display: block; flex: none; }
p, h1, dl, dd { margin: 0; }

.window {
  height: 100%;
  display: flex;
  flex-direction: column;
  border: 1px solid #8b8e98;
  border-radius: 9px;
  background: #c3d3d8;
  overflow: hidden;
  box-shadow: inset -1px -1px 0 #f2f5f6;
}

.ib {
  display: flex;
  align-items: center;
  justify-content: center;
  padding: 0;
  border: 0;
  background: none;
  font: inherit;
  color: inherit;
  white-space: nowrap;
}
.rule { width: 1px; align-self: stretch; background: #b3b9bc; }

/* title bar */
.titlebar {
  display: grid;
  grid-template-columns: 1fr auto 1fr;
  height: 40px;
  flex: none;
  background: #fff;
  border-top: 7px solid #eff1f9;
  border-bottom: 2px solid #46494a;
}
.title-left {
  display: grid;
  grid-template-columns: 30px 31px 31px 32px 1px 30px 13px 36px 25px;
  padding-bottom: 2px;
}
.title-left .rule { margin-bottom: -2px; }
.title { gap: 4px; font-size: 14px; padding: 0 0 2px 8px; }
.title .far { margin-left: 8px; }
.title-right {
  display: grid;
  grid-template-columns: 22px 18px 30px 30px 10px;
  justify-content: end;
  padding: 0 7px 2px 0;
}
.min::before { content: ""; width: 12px; height: 1px; margin-top: 12px; background: #3b4a4c; }

/* main toolbar */
.mainbar {
  display: grid;
  grid-template-columns: 91px 12px 59px 1px 89px 9px 38px 41px 8px 39px 17px 35px 11px 82px 12px 42px 13px 39px 13px 7px 42px 12px 35px 263px 1fr 6px 41px 36px;
  justify-items: end;
  align-items: center;
  height: 43px;
  flex: none;
  padding: 0 11px 0 1px;
  border-bottom: 1px solid #c9c4c2;
  box-shadow: inset 0 -1px 0 #fafafa;
}
.mainbar .rule { margin: 4px 0 5px; background: #b9b6b4; }
.mark { position: relative; }
.mark::after {
  content: "";
  position: absolute;
  inset: 0;
  border: 3px solid #ff8500;
  pointer-events: none;
}
.send { width: 91px; height: 44px; gap: 2px; }
.save { width: 55px; height: 44px; gap: 7px; }
.email { width: 83px; height: 44px; gap: 5px; }
.tall::after { inset: -2px 0; }
.gap6 { gap: 6px; }
.gap8 { gap: 7px; }

/* address form */
.form { flex: none; padding-top: 17px; }
.heads { display: grid; grid-template-columns: 446px 1fr; }
.left {
  display: grid;
  grid-template-columns: 130px 1fr;
  grid-template-rows: repeat(4, 21px);
  row-gap: 7px;
  align-items: center;
  padding-left: 13px;
  box-shadow: 1px 0 0 #fff, inset -1px 0 0 #8d9698;
}
.right {
  display: grid;
  grid-template-columns: 114px 1fr 77px;
  grid-template-rows: repeat(4, 21px);
  row-gap: 8px;
  align-items: center;
  padding-left: 9px;
}
.lead { display: flex; gap: 5px; padding-left: 7px; align-items: center; }
u { text-underline-offset: 2px; }
.line { display: flex; align-items: center; }
.box {
  height: 21px;
  min-width: 0;
  padding: 0;
  border: 1px solid #f0f0f0;
  border-bottom-color: #7e8485;
  border-radius: 0;
  background: #fff;
  font: inherit;
  color: inherit;
}
.grow { flex: 1; }
.w250 { width: 250px; }
.w90 { width: 90px; }
.w222 { width: 222px; }
.w265 { width: 265px; }
.wide { margin-right: 4px; }
.push { margin-left: 16px; gap: 7px; }
.push14 { margin-left: 14px; }
.tight { gap: 4px; }
.pick { position: relative; height: 21px; }
.pick select {
  display: block;
  width: 100%;
  height: 100%;
  padding: 0 20px 0 2px;
  border: 1px solid #d5dadb;
  border-radius: 1px;
  background: #fdfdfd;
  appearance: none;
  font: inherit;
  color: inherit;
}
.pick.hard select { padding: 0 20px 2px 1px; border-color: #7e8485; background: #fff; }
.pick svg { position: absolute; right: 5px; top: 8px; pointer-events: none; }
.side { justify-self: end; margin-right: 18px; }
.flagside { gap: 6px; margin-right: 20px; }
.pair { display: flex; align-items: center; gap: 11px; }
.due { padding-left: 4px; gap: 3px; }
.due .w90 { margin-left: 4px; }
.check { display: flex; align-items: center; gap: 4px; }
.check input {
  width: 16px;
  height: 16px;
  margin: 0;
  border: 1px solid #6a6f70;
  border-radius: 3px;
  background: #f3f3f3;
  appearance: none;
}
.spread { justify-content: space-between; }
.spread .check { padding: 0 2px 6px 0; }
.copies {
  display: grid;
  grid-template-columns: 128px 1fr 77px;
  row-gap: 7px;
  align-items: center;
  padding: 5px 0 0 13px;
}
.copies .box { height: 22px; }

/* tabs */
.tabs { display: flex; align-items: flex-end; flex: none; height: 35px; padding: 5px 0 0 11px; }
.tab {
  display: flex;
  align-items: center;
  gap: 3px;
  height: 27px;
  padding: 0 5px 0 3px;
  border: 1px solid #e2e5e6;
  border-width: 1px 1px 0 0;
  background: #f1f1f1;
  font: inherit;
  color: inherit;
  white-space: nowrap;
}
.tab.active { height: 30px; gap: 7px; padding: 0 6px; background: #fbfbfb; border-color: #fff; }
.tab:nth-child(3) { gap: 4px; }
.tab:nth-child(4) { gap: 8px; padding-left: 10px; }
.tab:nth-child(5) { gap: 4px; padding-left: 4px; }
.tab:nth-child(6) { gap: 4px; padding: 0 6px; }
.ext {
  position: relative;
  width: 21px;
  height: 20px;
  align-items: flex-start;
  font: bold 10px/10px "Noto Sans", sans-serif;
  text-align: center;
  z-index: 0;
}
.ext svg { position: absolute; inset: 0; z-index: -1; }
.htm { color: #f5784a; }
.pdf { color: #f0362c; }
.doc { color: #1f6fb0; }

/* panel */
.panel {
  flex: 1;
  min-height: 0;
  display: flex;
  flex-direction: column;
  margin: 0 10px 9px 11px;
  border: 2px solid #f8f9f9;
}
.subbar {
  display: grid;
  grid-template-columns: 135px 191px 29px 30px 30px 6px 116px 215px 31px 11px 6px 57px 167px 30px 11px 1fr;
  justify-items: end;
  align-items: center;
  height: 35px;
  flex: none;
  padding-right: 9px;
  background: #e1e9ec;
}
.subbar label { white-space: nowrap; }
.subbar .box:nth-child(2) { width: 188px; }
.subbar .box:nth-child(8) { width: 213px; }
.subbar .box:nth-child(13) { width: 163px; }
.subbar .rule { margin: 2px 0; }
.editor {
  flex: 1;
  min-height: 0;
  display: flex;
  flex-direction: column;
  border: 1px solid #a3a8ae;
  background: #efefef;
}
.ribbon { display: flex; flex: none; height: 97px; }
.ribbon section + section { border-left: 1px solid #b4b7b9; }
.files { width: 241px; }
.filerow, .insrow {
  display: grid;
  height: 49px;
  align-items: center;
  justify-items: end;
}
.filerow { grid-template-columns: 33px 42px 15px 40px 63px 25px 18px; }
.load { width: 56px; height: 41px; gap: 5px; }
.paperrow { display: flex; height: 48px; }
.paperrow > .ib:first-child { width: 42px; padding-left: 4px; }
.paper { flex: 1; gap: 4px; padding: 0 6px 3px 9px; }
.paper span { flex: 1; text-align: left; }
.fonts { width: 239px; padding-top: 2px; }
.fontrow, .fmtrow, .editrow, .zoomrow, .langrow {
  display: grid;
  height: 31px;
  align-items: center;
  justify-items: end;
}
.fontrow { grid-template-columns: 138px 52px 26px 15px; }
.fontrow .pick { width: 135px; }
.num { width: 49px; text-align: right; }
.fmtrow { grid-template-columns: 30px 31px 32px 32px 10px 37px 12px 36px 11px; }
.cell { width: 27px; height: 27px; }
.on { background: #cce8ff; border: 1px solid #99d1ff; border-radius: 2px; }
.edits { width: 191px; padding: 2px 0 0 1px; }
.editrow { grid-template-columns: repeat(6, 31px); justify-items: center; }
.zoomrow { grid-template-columns: 31px 32px 26px 33px 32px 32px; }
.langrow { grid-template-columns: 31px 12px 34px 12px 34px 15px 45px; }
.insrow { grid-template-columns: 34px 15px 38px 16px 42px 11px 39px 15px 41px 13px 41px 13px; }
.insrow + .insrow { height: 44px; }
.bigzoom { margin: 9px 24px 0 auto; align-self: flex-start; }

/* document area */
.work { flex: 1; min-height: 0; display: flex; }
.canvas {
  flex: 1;
  display: grid;
  grid-template-columns: 42px 1fr;
  grid-template-rows: 52px 1fr;
  padding-right: 6px;
  background: #d0d1d3;
  overflow: hidden;
}
.rulerbtn { grid-area: 1 / 2; justify-self: start; padding-left: 18px; }
.hruler {
  position: relative;
  grid-area: 1 / 2;
  justify-self: center;
  align-self: start;
  width: 992px;
  height: 33px;
  margin-top: 9px;
  border: 1px solid #b6b8bc;
  background: linear-gradient(90deg, #e6e7eb 117px, #fff 117px, #fff 873px, #e6e7eb 873px);
}
.ticks { display: flex; height: 100%; }
.ticks span {
  flex: 1;
  padding-top: 8px;
  text-align: center;
  font: 13px/15px "Noto Sans", sans-serif;
  color: #444;
  background:
    linear-gradient(#999, #999) 50% 0 / 1px 6px,
    linear-gradient(#999, #999) 50% 100% / 1px 6px,
    linear-gradient(#aaa, #aaa) 100% 50% / 1px 9px,
    linear-gradient(#aaa, #aaa) 25% 50% / 1px 3px,
    linear-gradient(#aaa, #aaa) 75% 50% / 1px 3px;
  background-repeat: no-repeat;
}
.ticks span:last-child {
  background:
    linear-gradient(#999, #999) 50% 0 / 1px 6px,
    linear-gradient(#999, #999) 50% 100% / 1px 6px,
    linear-gradient(#aaa, #aaa) 25% 50% / 1px 3px,
    linear-gradient(#aaa, #aaa) 75% 50% / 1px 3px;
  background-repeat: no-repeat;
}
.stops { position: absolute; left: -1px; top: -1px; width: 992px; height: 33px; }
.pages { position: absolute; left: 446px; top: -7px; line-height: 14px; white-space: nowrap; }
.vruler {
  grid-area: 2 / 1;
  width: 32px;
  margin-left: 10px;
  min-height: 0;
  height: 100%;
  overflow: hidden;
  display: flex;
  flex-direction: column;
  justify-content: flex-start;
  background: #fff;
}
.vruler span {
  flex: none;
  height: 47px;
  line-height: 32px;
  text-align: center;
  writing-mode: vertical-rl;
  transform: rotate(180deg);
  font-size: 13px;
  color: #444;
  background:
    linear-gradient(#999, #999) 0 50% / 6px 1px,
    linear-gradient(#999, #999) 100% 50% / 6px 1px,
    linear-gradient(#aaa, #aaa) 50% 0 / 8px 1px,
    linear-gradient(#aaa, #aaa) 50% 25% / 4px 1px,
    linear-gradient(#aaa, #aaa) 50% 75% / 4px 1px;
  background-repeat: no-repeat;
}
.vruler span:first-child { margin-top: -9px; }
.vruler span:last-child { width: 32px; }
.sheet {
  grid-area: 2 / 2;
  justify-self: center;
  width: 992px;
  height: 1403px;
  padding: 7px 117px;
  border-left: 1px solid #b6b8bc;
  border-right: 1px solid #b6b8bc;
  background: #fff;
  font: 17px/19px "Liberation Sans", Arial, sans-serif;
  white-space: nowrap;
}
.date { text-align: right; }
.sheet h1 { margin: 20px 0 38px; font-size: 17px; line-height: 19px; }
.para { margin-top: 19px; }
.sheet dl { margin-top: 20px; }
dl { display: grid; grid-template-columns: 260px 1fr; }
.scroll { width: 21px; padding: 99px 7px 0 8px; }
.scroll i { display: block; width: 6px; height: 140px; background: #7f7f7f; }
```
